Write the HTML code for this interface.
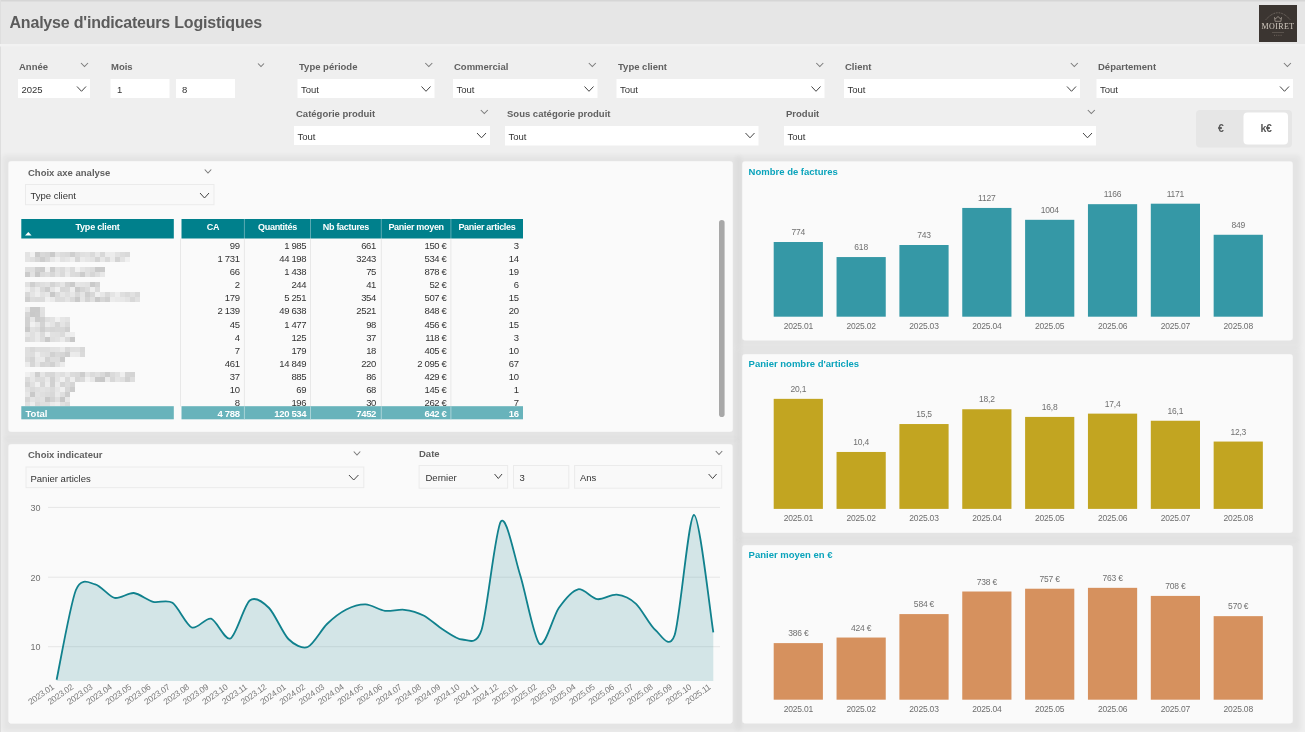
<!DOCTYPE html>
<html><head><meta charset="utf-8"><title>Analyse d'indicateurs Logistiques</title>
<style>html,body{margin:0;padding:0;background:#efefef;width:1305px;height:732px;overflow:hidden}svg{display:block;will-change:transform}</style>
</head><body>
<svg width="1305" height="732" viewBox="0 0 1305 732" font-family="'Liberation Sans', sans-serif"><defs>
<filter id="sh" x="-10%" y="-20%" width="120%" height="140%"><feMorphology in="SourceAlpha" operator="dilate" radius="7"/><feGaussianBlur stdDeviation="2.5"/><feOffset dx="0.5" dy="1"/><feComponentTransfer><feFuncA type="linear" slope="0.05"/></feComponentTransfer><feMerge><feMergeNode/><feMergeNode in="SourceGraphic"/></feMerge></filter>
<filter id="bl" x="-2%" y="-20%" width="104%" height="140%"><feGaussianBlur stdDeviation="0.6"/></filter>
</defs><rect x="0" y="0" width="1305" height="732" fill="#efefef"/><rect x="0" y="0" width="1305" height="44" fill="#e6e6e6"/><rect x="0" y="0" width="1305" height="1.5" fill="#d6d6d6"/><rect x="0" y="0" width="1" height="732" fill="#dedede"/><text x="9.5" y="28" font-size="16" fill="#5c5c5c" font-weight="bold" text-anchor="start" letter-spacing="-0.2">Analyse d'indicateurs Logistiques</text><rect x="1259" y="5" width="38" height="37" fill="#3b3531"/><text x="1278" y="29.2" font-size="8" fill="#d6cec4" text-anchor="middle" font-family="'Liberation Serif', serif" letter-spacing="0.35">MOIRET</text><path d="M1266,19.5 Q1278,6 1290,19.5" fill="none" stroke="#a0968c" stroke-width="0.7" stroke-dasharray="0.8,0.9"/><path d="M1274.5,17.5 l1.2,1.2 l2.3,-2.2 l2.3,2.2 l1.2,-1.2 l-0.6,3.8 h-5.8 z" fill="none" stroke="#c9c0b5" stroke-width="0.6"/><path d="M1272.5,32.5 h11" stroke="#8a8178" stroke-width="0.8" stroke-dasharray="1,1"/><path d="M1274,35.3 h8" stroke="#7d746b" stroke-width="0.8" stroke-dasharray="1,1.2"/><rect x="0" y="44" width="1305" height="2.5" fill="#f2f2f2"/><text x="19" y="70" font-size="9.5" fill="#606060" font-weight="bold" text-anchor="start" >Année</text><path d="M81.0,63 L84.5,66.5 L88.0,63" fill="none" stroke="#7a7a7a" stroke-width="1.05"/><rect x="18" y="79" width="72" height="19" fill="#ffffff"/><text x="21.5" y="93" font-size="9.5" fill="#333" font-weight="normal" text-anchor="start" >2025</text><path d="M77.0,86.5 L81.5,91.3 L86.0,86.5" fill="none" stroke="#444" stroke-width="1"/><text x="299" y="70" font-size="9.5" fill="#606060" font-weight="bold" text-anchor="start" >Type période</text><path d="M425.3,63 L428.8,66.5 L432.3,63" fill="none" stroke="#7a7a7a" stroke-width="1.05"/><rect x="297.5" y="79" width="137.0" height="19" fill="#ffffff"/><text x="301.0" y="93" font-size="9.5" fill="#333" font-weight="normal" text-anchor="start" >Tout</text><path d="M421.5,86.5 L426.0,91.3 L430.5,86.5" fill="none" stroke="#444" stroke-width="1"/><text x="454" y="70" font-size="9.5" fill="#606060" font-weight="bold" text-anchor="start" >Commercial</text><path d="M588.8,63 L592.3,66.5 L595.8,63" fill="none" stroke="#7a7a7a" stroke-width="1.05"/><rect x="453" y="79" width="144.5" height="19" fill="#ffffff"/><text x="456.5" y="93" font-size="9.5" fill="#333" font-weight="normal" text-anchor="start" >Tout</text><path d="M584.5,86.5 L589.0,91.3 L593.5,86.5" fill="none" stroke="#444" stroke-width="1"/><text x="618" y="70" font-size="9.5" fill="#606060" font-weight="bold" text-anchor="start" >Type client</text><path d="M816.3,63 L819.8,66.5 L823.3,63" fill="none" stroke="#7a7a7a" stroke-width="1.05"/><rect x="616.5" y="79" width="208.0" height="19" fill="#ffffff"/><text x="620.0" y="93" font-size="9.5" fill="#333" font-weight="normal" text-anchor="start" >Tout</text><path d="M811.5,86.5 L816.0,91.3 L820.5,86.5" fill="none" stroke="#444" stroke-width="1"/><text x="845" y="70" font-size="9.5" fill="#606060" font-weight="bold" text-anchor="start" >Client</text><path d="M1070.8,63 L1074.3,66.5 L1077.8,63" fill="none" stroke="#7a7a7a" stroke-width="1.05"/><rect x="844" y="79" width="236" height="19" fill="#ffffff"/><text x="847.5" y="93" font-size="9.5" fill="#333" font-weight="normal" text-anchor="start" >Tout</text><path d="M1067.0,86.5 L1071.5,91.3 L1076.0,86.5" fill="none" stroke="#444" stroke-width="1"/><text x="1098" y="70" font-size="9.5" fill="#606060" font-weight="bold" text-anchor="start" >Département</text><path d="M1283.9,63 L1287.4,66.5 L1290.9,63" fill="none" stroke="#7a7a7a" stroke-width="1.05"/><rect x="1096.5" y="79" width="196.5" height="19" fill="#ffffff"/><text x="1100.0" y="93" font-size="9.5" fill="#333" font-weight="normal" text-anchor="start" >Tout</text><path d="M1280.0,86.5 L1284.5,91.3 L1289.0,86.5" fill="none" stroke="#444" stroke-width="1"/><text x="111" y="70" font-size="9.5" fill="#606060" font-weight="bold" text-anchor="start" >Mois</text><path d="M258.0,63.5 L261,66.5 L264.0,63.5" fill="none" stroke="#7a7a7a" stroke-width="1.05"/><rect x="110.5" y="79" width="59.0" height="19" fill="#ffffff"/><text x="117" y="93" font-size="9.5" fill="#333" font-weight="normal" text-anchor="start" >1</text><rect x="176" y="79" width="59" height="19" fill="#ffffff"/><text x="182" y="93" font-size="9.5" fill="#333" font-weight="normal" text-anchor="start" >8</text><text x="296" y="117" font-size="9.5" fill="#606060" font-weight="bold" text-anchor="start" >Catégorie produit</text><path d="M480.8,110 L484.3,113.5 L487.8,110" fill="none" stroke="#7a7a7a" stroke-width="1.05"/><rect x="294" y="126" width="196" height="19" fill="#ffffff"/><text x="297.5" y="140" font-size="9.5" fill="#333" font-weight="normal" text-anchor="start" >Tout</text><path d="M477.0,133 L481.5,137.8 L486.0,133" fill="none" stroke="#444" stroke-width="1"/><text x="507" y="117" font-size="9.5" fill="#606060" font-weight="bold" text-anchor="start" >Sous catégorie produit</text><rect x="505" y="126" width="253.5" height="19.5" fill="#ffffff"/><text x="508.5" y="140" font-size="9.5" fill="#333" font-weight="normal" text-anchor="start" >Tout</text><path d="M745.5,133 L750.0,137.8 L754.5,133" fill="none" stroke="#444" stroke-width="1"/><text x="786" y="117" font-size="9.5" fill="#606060" font-weight="bold" text-anchor="start" >Produit</text><path d="M1087.8,110 L1091.3,113.5 L1094.8,110" fill="none" stroke="#7a7a7a" stroke-width="1.05"/><rect x="784" y="126" width="312" height="19.5" fill="#ffffff"/><text x="787.5" y="140" font-size="9.5" fill="#333" font-weight="normal" text-anchor="start" >Tout</text><path d="M1083.0,133 L1087.5,137.8 L1092.0,133" fill="none" stroke="#444" stroke-width="1"/><rect x="1196" y="110" width="96" height="37.5" rx="4" fill="#e6e6e6"/><rect x="1243.5" y="112.5" width="44.5" height="32" rx="4" fill="#ffffff"/><text x="1221" y="132" font-size="10.5" fill="#5a5a5a" font-weight="bold" text-anchor="middle" >€</text><text x="1266" y="132" font-size="10.5" fill="#555" font-weight="bold" text-anchor="middle" letter-spacing="-0.4">k€</text><rect x="8.5" y="161.3" width="724.2" height="270.4" rx="3" fill="#fafafa" filter="url(#sh)"/><rect x="8.5" y="444.2" width="724.0" height="279.3" rx="3" fill="#fafafa" filter="url(#sh)"/><rect x="742.3" y="161.5" width="550.4000000000001" height="178.7" rx="3" fill="#fafafa" filter="url(#sh)"/><rect x="742.3" y="354.2" width="550.4000000000001" height="178.50000000000006" rx="3" fill="#fafafa" filter="url(#sh)"/><rect x="742.3" y="545.2" width="550.4000000000001" height="178.0999999999999" rx="3" fill="#fafafa" filter="url(#sh)"/><text x="28" y="176" font-size="9.5" fill="#606060" font-weight="bold" text-anchor="start" >Choix axe analyse</text><path d="M204.75,169.5 L208,173.0 L211.25,169.5" fill="none" stroke="#7a7a7a" stroke-width="1.05"/><rect x="25.5" y="184.5" width="188.5" height="20.19999999999999" fill="#f9f9f9" stroke="#ebebeb" stroke-width="1"/><text x="30.5" y="199" font-size="9.5" fill="#333" font-weight="normal" text-anchor="start" >Type client</text><path d="M200.0,193 L204.5,198 L209.0,193" fill="none" stroke="#444" stroke-width="1"/><rect x="21.3" y="219" width="152.5" height="19.5" fill="#00808c"/><rect x="181.5" y="219" width="341.5" height="19.5" fill="#00808c"/><text x="97.5" y="230" font-size="9" fill="#fff" font-weight="bold" text-anchor="middle" letter-spacing="-0.2">Type client</text><path d="M25,235.5 L28.3,232 L31.6,235.5 Z" fill="#fff"/><text x="212.95" y="230" font-size="9" fill="#fff" font-weight="bold" text-anchor="middle" letter-spacing="-0.3">CA</text><text x="277.45" y="230" font-size="9" fill="#fff" font-weight="bold" text-anchor="middle" letter-spacing="-0.3">Quantités</text><text x="345.9" y="230" font-size="9" fill="#fff" font-weight="bold" text-anchor="middle" letter-spacing="-0.3">Nb factures</text><text x="416.1" y="230" font-size="9" fill="#fff" font-weight="bold" text-anchor="middle" letter-spacing="-0.3">Panier moyen</text><text x="486.95" y="230" font-size="9" fill="#fff" font-weight="bold" text-anchor="middle" letter-spacing="-0.3">Panier articles</text><rect x="243.9" y="219" width="1" height="19.5" fill="#5aaab3"/><rect x="310.0" y="219" width="1" height="19.5" fill="#5aaab3"/><rect x="380.8" y="219" width="1" height="19.5" fill="#5aaab3"/><rect x="450.4" y="219" width="1" height="19.5" fill="#5aaab3"/><rect x="180.0" y="238.5" width="1" height="168" fill="#e8e8e8"/><rect x="243.9" y="238.5" width="1" height="168" fill="#e8e8e8"/><rect x="310.0" y="238.5" width="1" height="168" fill="#e8e8e8"/><rect x="380.8" y="238.5" width="1" height="168" fill="#e8e8e8"/><rect x="450.4" y="238.5" width="1" height="168" fill="#e8e8e8"/><clipPath id="tb"><rect x="15" y="238.5" width="520" height="167.7"/></clipPath><g clip-path="url(#tb)"><text x="239.6" y="249.2" font-size="9.5" fill="#333" font-weight="normal" text-anchor="end" letter-spacing="-0.35">99</text><text x="306.2" y="249.2" font-size="9.5" fill="#333" font-weight="normal" text-anchor="end" letter-spacing="-0.35">1 985</text><text x="376" y="249.2" font-size="9.5" fill="#333" font-weight="normal" text-anchor="end" letter-spacing="-0.35">661</text><text x="446.5" y="249.2" font-size="9.5" fill="#333" font-weight="normal" text-anchor="end" letter-spacing="-0.35">150 €</text><text x="518.7" y="249.2" font-size="9.5" fill="#333" font-weight="normal" text-anchor="end" letter-spacing="-0.35">3</text><text x="239.6" y="262.25" font-size="9.5" fill="#333" font-weight="normal" text-anchor="end" letter-spacing="-0.35">1 731</text><text x="306.2" y="262.25" font-size="9.5" fill="#333" font-weight="normal" text-anchor="end" letter-spacing="-0.35">44 198</text><text x="376" y="262.25" font-size="9.5" fill="#333" font-weight="normal" text-anchor="end" letter-spacing="-0.35">3243</text><text x="446.5" y="262.25" font-size="9.5" fill="#333" font-weight="normal" text-anchor="end" letter-spacing="-0.35">534 €</text><text x="518.7" y="262.25" font-size="9.5" fill="#333" font-weight="normal" text-anchor="end" letter-spacing="-0.35">14</text><text x="239.6" y="275.3" font-size="9.5" fill="#333" font-weight="normal" text-anchor="end" letter-spacing="-0.35">66</text><text x="306.2" y="275.3" font-size="9.5" fill="#333" font-weight="normal" text-anchor="end" letter-spacing="-0.35">1 438</text><text x="376" y="275.3" font-size="9.5" fill="#333" font-weight="normal" text-anchor="end" letter-spacing="-0.35">75</text><text x="446.5" y="275.3" font-size="9.5" fill="#333" font-weight="normal" text-anchor="end" letter-spacing="-0.35">878 €</text><text x="518.7" y="275.3" font-size="9.5" fill="#333" font-weight="normal" text-anchor="end" letter-spacing="-0.35">19</text><text x="239.6" y="288.35" font-size="9.5" fill="#333" font-weight="normal" text-anchor="end" letter-spacing="-0.35">2</text><text x="306.2" y="288.35" font-size="9.5" fill="#333" font-weight="normal" text-anchor="end" letter-spacing="-0.35">244</text><text x="376" y="288.35" font-size="9.5" fill="#333" font-weight="normal" text-anchor="end" letter-spacing="-0.35">41</text><text x="446.5" y="288.35" font-size="9.5" fill="#333" font-weight="normal" text-anchor="end" letter-spacing="-0.35">52 €</text><text x="518.7" y="288.35" font-size="9.5" fill="#333" font-weight="normal" text-anchor="end" letter-spacing="-0.35">6</text><text x="239.6" y="301.4" font-size="9.5" fill="#333" font-weight="normal" text-anchor="end" letter-spacing="-0.35">179</text><text x="306.2" y="301.4" font-size="9.5" fill="#333" font-weight="normal" text-anchor="end" letter-spacing="-0.35">5 251</text><text x="376" y="301.4" font-size="9.5" fill="#333" font-weight="normal" text-anchor="end" letter-spacing="-0.35">354</text><text x="446.5" y="301.4" font-size="9.5" fill="#333" font-weight="normal" text-anchor="end" letter-spacing="-0.35">507 €</text><text x="518.7" y="301.4" font-size="9.5" fill="#333" font-weight="normal" text-anchor="end" letter-spacing="-0.35">15</text><text x="239.6" y="314.45" font-size="9.5" fill="#333" font-weight="normal" text-anchor="end" letter-spacing="-0.35">2 139</text><text x="306.2" y="314.45" font-size="9.5" fill="#333" font-weight="normal" text-anchor="end" letter-spacing="-0.35">49 638</text><text x="376" y="314.45" font-size="9.5" fill="#333" font-weight="normal" text-anchor="end" letter-spacing="-0.35">2521</text><text x="446.5" y="314.45" font-size="9.5" fill="#333" font-weight="normal" text-anchor="end" letter-spacing="-0.35">848 €</text><text x="518.7" y="314.45" font-size="9.5" fill="#333" font-weight="normal" text-anchor="end" letter-spacing="-0.35">20</text><text x="239.6" y="327.5" font-size="9.5" fill="#333" font-weight="normal" text-anchor="end" letter-spacing="-0.35">45</text><text x="306.2" y="327.5" font-size="9.5" fill="#333" font-weight="normal" text-anchor="end" letter-spacing="-0.35">1 477</text><text x="376" y="327.5" font-size="9.5" fill="#333" font-weight="normal" text-anchor="end" letter-spacing="-0.35">98</text><text x="446.5" y="327.5" font-size="9.5" fill="#333" font-weight="normal" text-anchor="end" letter-spacing="-0.35">456 €</text><text x="518.7" y="327.5" font-size="9.5" fill="#333" font-weight="normal" text-anchor="end" letter-spacing="-0.35">15</text><text x="239.6" y="340.55" font-size="9.5" fill="#333" font-weight="normal" text-anchor="end" letter-spacing="-0.35">4</text><text x="306.2" y="340.55" font-size="9.5" fill="#333" font-weight="normal" text-anchor="end" letter-spacing="-0.35">125</text><text x="376" y="340.55" font-size="9.5" fill="#333" font-weight="normal" text-anchor="end" letter-spacing="-0.35">37</text><text x="446.5" y="340.55" font-size="9.5" fill="#333" font-weight="normal" text-anchor="end" letter-spacing="-0.35">118 €</text><text x="518.7" y="340.55" font-size="9.5" fill="#333" font-weight="normal" text-anchor="end" letter-spacing="-0.35">3</text><text x="239.6" y="353.6" font-size="9.5" fill="#333" font-weight="normal" text-anchor="end" letter-spacing="-0.35">7</text><text x="306.2" y="353.6" font-size="9.5" fill="#333" font-weight="normal" text-anchor="end" letter-spacing="-0.35">179</text><text x="376" y="353.6" font-size="9.5" fill="#333" font-weight="normal" text-anchor="end" letter-spacing="-0.35">18</text><text x="446.5" y="353.6" font-size="9.5" fill="#333" font-weight="normal" text-anchor="end" letter-spacing="-0.35">405 €</text><text x="518.7" y="353.6" font-size="9.5" fill="#333" font-weight="normal" text-anchor="end" letter-spacing="-0.35">10</text><text x="239.6" y="366.65" font-size="9.5" fill="#333" font-weight="normal" text-anchor="end" letter-spacing="-0.35">461</text><text x="306.2" y="366.65" font-size="9.5" fill="#333" font-weight="normal" text-anchor="end" letter-spacing="-0.35">14 849</text><text x="376" y="366.65" font-size="9.5" fill="#333" font-weight="normal" text-anchor="end" letter-spacing="-0.35">220</text><text x="446.5" y="366.65" font-size="9.5" fill="#333" font-weight="normal" text-anchor="end" letter-spacing="-0.35">2 095 €</text><text x="518.7" y="366.65" font-size="9.5" fill="#333" font-weight="normal" text-anchor="end" letter-spacing="-0.35">67</text><text x="239.6" y="379.7" font-size="9.5" fill="#333" font-weight="normal" text-anchor="end" letter-spacing="-0.35">37</text><text x="306.2" y="379.7" font-size="9.5" fill="#333" font-weight="normal" text-anchor="end" letter-spacing="-0.35">885</text><text x="376" y="379.7" font-size="9.5" fill="#333" font-weight="normal" text-anchor="end" letter-spacing="-0.35">86</text><text x="446.5" y="379.7" font-size="9.5" fill="#333" font-weight="normal" text-anchor="end" letter-spacing="-0.35">429 €</text><text x="518.7" y="379.7" font-size="9.5" fill="#333" font-weight="normal" text-anchor="end" letter-spacing="-0.35">10</text><text x="239.6" y="392.75" font-size="9.5" fill="#333" font-weight="normal" text-anchor="end" letter-spacing="-0.35">10</text><text x="306.2" y="392.75" font-size="9.5" fill="#333" font-weight="normal" text-anchor="end" letter-spacing="-0.35">69</text><text x="376" y="392.75" font-size="9.5" fill="#333" font-weight="normal" text-anchor="end" letter-spacing="-0.35">68</text><text x="446.5" y="392.75" font-size="9.5" fill="#333" font-weight="normal" text-anchor="end" letter-spacing="-0.35">145 €</text><text x="518.7" y="392.75" font-size="9.5" fill="#333" font-weight="normal" text-anchor="end" letter-spacing="-0.35">1</text><text x="239.6" y="405.8" font-size="9.5" fill="#333" font-weight="normal" text-anchor="end" letter-spacing="-0.35">8</text><text x="306.2" y="405.8" font-size="9.5" fill="#333" font-weight="normal" text-anchor="end" letter-spacing="-0.35">196</text><text x="376" y="405.8" font-size="9.5" fill="#333" font-weight="normal" text-anchor="end" letter-spacing="-0.35">30</text><text x="446.5" y="405.8" font-size="9.5" fill="#333" font-weight="normal" text-anchor="end" letter-spacing="-0.35">262 €</text><text x="518.7" y="405.8" font-size="9.5" fill="#333" font-weight="normal" text-anchor="end" letter-spacing="-0.35">7</text><g filter="url(#bl)"><rect x="25" y="252" width="5" height="5" fill="rgb(227,227,227)"/><rect x="30" y="252" width="5" height="5" fill="rgb(241,241,241)"/><rect x="35" y="252" width="5" height="5" fill="rgb(203,203,203)"/><rect x="40" y="252" width="5" height="5" fill="rgb(216,216,216)"/><rect x="45" y="252" width="5" height="5" fill="rgb(213,213,213)"/><rect x="50" y="252" width="5" height="5" fill="rgb(202,202,202)"/><rect x="55" y="252" width="5" height="5" fill="rgb(226,226,226)"/><rect x="60" y="252" width="5" height="5" fill="rgb(220,220,220)"/><rect x="65" y="252" width="5" height="5" fill="rgb(218,218,218)"/><rect x="70" y="252" width="5" height="5" fill="rgb(207,207,207)"/><rect x="75" y="252" width="5" height="5" fill="rgb(219,219,219)"/><rect x="80" y="252" width="5" height="5" fill="rgb(224,224,224)"/><rect x="85" y="252" width="5" height="5" fill="rgb(226,226,226)"/><rect x="90" y="252" width="5" height="5" fill="rgb(218,218,218)"/><rect x="95" y="252" width="5" height="5" fill="rgb(232,232,232)"/><rect x="100" y="252" width="5" height="5" fill="rgb(216,216,216)"/><rect x="105" y="252" width="5" height="5" fill="rgb(236,236,236)"/><rect x="110" y="252" width="5" height="5" fill="rgb(236,236,236)"/><rect x="115" y="252" width="5" height="5" fill="rgb(226,226,226)"/><rect x="120" y="252" width="5" height="5" fill="rgb(220,220,220)"/><rect x="125" y="252" width="5" height="5" fill="rgb(217,217,217)"/><rect x="25" y="257" width="5" height="5" fill="rgb(228,228,228)"/><rect x="30" y="257" width="5" height="5" fill="rgb(224,224,224)"/><rect x="35" y="257" width="5" height="5" fill="rgb(215,215,215)"/><rect x="40" y="257" width="5" height="5" fill="rgb(205,205,205)"/><rect x="45" y="257" width="5" height="5" fill="rgb(216,216,216)"/><rect x="50" y="257" width="5" height="5" fill="rgb(232,232,232)"/><rect x="55" y="257" width="5" height="5" fill="rgb(240,240,240)"/><rect x="60" y="257" width="5" height="5" fill="rgb(226,226,226)"/><rect x="65" y="257" width="5" height="5" fill="rgb(230,230,230)"/><rect x="70" y="257" width="5" height="5" fill="rgb(238,238,238)"/><rect x="75" y="257" width="5" height="5" fill="rgb(215,215,215)"/><rect x="80" y="257" width="5" height="5" fill="rgb(235,235,235)"/><rect x="85" y="257" width="5" height="5" fill="rgb(230,230,230)"/><rect x="90" y="257" width="5" height="5" fill="rgb(227,227,227)"/><rect x="95" y="257" width="5" height="5" fill="rgb(212,212,212)"/><rect x="100" y="257" width="5" height="5" fill="rgb(231,231,231)"/><rect x="105" y="257" width="5" height="5" fill="rgb(218,218,218)"/><rect x="110" y="257" width="5" height="5" fill="rgb(235,235,235)"/><rect x="115" y="257" width="5" height="5" fill="rgb(212,212,212)"/><rect x="120" y="257" width="5" height="5" fill="rgb(227,227,227)"/><rect x="125" y="257" width="5" height="5" fill="rgb(240,240,240)"/><rect x="25" y="267" width="5" height="5" fill="rgb(223,223,223)"/><rect x="30" y="267" width="5" height="5" fill="rgb(223,223,223)"/><rect x="35" y="267" width="5" height="5" fill="rgb(207,207,207)"/><rect x="40" y="267" width="5" height="5" fill="rgb(204,204,204)"/><rect x="45" y="267" width="5" height="5" fill="rgb(241,241,241)"/><rect x="50" y="267" width="5" height="5" fill="rgb(205,205,205)"/><rect x="55" y="267" width="5" height="5" fill="rgb(225,225,225)"/><rect x="60" y="267" width="5" height="5" fill="rgb(219,219,219)"/><rect x="65" y="267" width="5" height="5" fill="rgb(231,231,231)"/><rect x="70" y="267" width="5" height="5" fill="rgb(220,220,220)"/><rect x="75" y="267" width="5" height="5" fill="rgb(242,242,242)"/><rect x="80" y="267" width="5" height="5" fill="rgb(229,229,229)"/><rect x="85" y="267" width="5" height="5" fill="rgb(224,224,224)"/><rect x="90" y="267" width="5" height="5" fill="rgb(220,220,220)"/><rect x="95" y="267" width="5" height="5" fill="rgb(202,202,202)"/><rect x="100" y="267" width="5" height="5" fill="rgb(203,203,203)"/><rect x="25" y="272" width="5" height="5" fill="rgb(203,203,203)"/><rect x="30" y="272" width="5" height="5" fill="rgb(226,226,226)"/><rect x="35" y="272" width="5" height="5" fill="rgb(200,200,200)"/><rect x="40" y="272" width="5" height="5" fill="rgb(219,219,219)"/><rect x="45" y="272" width="5" height="5" fill="rgb(223,223,223)"/><rect x="50" y="272" width="5" height="5" fill="rgb(215,215,215)"/><rect x="55" y="272" width="5" height="5" fill="rgb(227,227,227)"/><rect x="60" y="272" width="5" height="5" fill="rgb(218,218,218)"/><rect x="65" y="272" width="5" height="5" fill="rgb(235,235,235)"/><rect x="70" y="272" width="5" height="5" fill="rgb(220,220,220)"/><rect x="75" y="272" width="5" height="5" fill="rgb(218,218,218)"/><rect x="80" y="272" width="5" height="5" fill="rgb(204,204,204)"/><rect x="85" y="272" width="5" height="5" fill="rgb(224,224,224)"/><rect x="90" y="272" width="5" height="5" fill="rgb(214,214,214)"/><rect x="95" y="272" width="5" height="5" fill="rgb(223,223,223)"/><rect x="100" y="272" width="5" height="5" fill="rgb(232,232,232)"/><rect x="25" y="282" width="5" height="5" fill="rgb(225,225,225)"/><rect x="30" y="282" width="5" height="5" fill="rgb(207,207,207)"/><rect x="35" y="282" width="5" height="5" fill="rgb(219,219,219)"/><rect x="40" y="282" width="5" height="5" fill="rgb(223,223,223)"/><rect x="45" y="282" width="5" height="5" fill="rgb(226,226,226)"/><rect x="50" y="282" width="5" height="5" fill="rgb(212,212,212)"/><rect x="55" y="282" width="5" height="5" fill="rgb(221,221,221)"/><rect x="60" y="282" width="5" height="5" fill="rgb(229,229,229)"/><rect x="65" y="282" width="5" height="5" fill="rgb(211,211,211)"/><rect x="70" y="282" width="5" height="5" fill="rgb(203,203,203)"/><rect x="75" y="282" width="5" height="5" fill="rgb(230,230,230)"/><rect x="80" y="282" width="5" height="5" fill="rgb(228,228,228)"/><rect x="85" y="282" width="5" height="5" fill="rgb(226,226,226)"/><rect x="90" y="282" width="5" height="5" fill="rgb(202,202,202)"/><rect x="95" y="282" width="5" height="5" fill="rgb(212,212,212)"/><rect x="25" y="287" width="5" height="5" fill="rgb(240,240,240)"/><rect x="30" y="287" width="5" height="5" fill="rgb(225,225,225)"/><rect x="35" y="287" width="5" height="5" fill="rgb(235,235,235)"/><rect x="40" y="287" width="5" height="5" fill="rgb(217,217,217)"/><rect x="45" y="287" width="5" height="5" fill="rgb(205,205,205)"/><rect x="50" y="287" width="5" height="5" fill="rgb(229,229,229)"/><rect x="55" y="287" width="5" height="5" fill="rgb(241,241,241)"/><rect x="60" y="287" width="5" height="5" fill="rgb(215,215,215)"/><rect x="65" y="287" width="5" height="5" fill="rgb(217,217,217)"/><rect x="70" y="287" width="5" height="5" fill="rgb(238,238,238)"/><rect x="75" y="287" width="5" height="5" fill="rgb(203,203,203)"/><rect x="80" y="287" width="5" height="5" fill="rgb(213,213,213)"/><rect x="85" y="287" width="5" height="5" fill="rgb(220,220,220)"/><rect x="90" y="287" width="5" height="5" fill="rgb(239,239,239)"/><rect x="95" y="287" width="5" height="5" fill="rgb(220,220,220)"/><rect x="25" y="292" width="5" height="5" fill="rgb(216,216,216)"/><rect x="30" y="292" width="5" height="5" fill="rgb(229,229,229)"/><rect x="35" y="292" width="5" height="5" fill="rgb(238,238,238)"/><rect x="40" y="292" width="5" height="5" fill="rgb(226,226,226)"/><rect x="45" y="292" width="5" height="5" fill="rgb(231,231,231)"/><rect x="50" y="292" width="5" height="5" fill="rgb(200,200,200)"/><rect x="55" y="292" width="5" height="5" fill="rgb(219,219,219)"/><rect x="60" y="292" width="5" height="5" fill="rgb(230,230,230)"/><rect x="65" y="292" width="5" height="5" fill="rgb(223,223,223)"/><rect x="70" y="292" width="5" height="5" fill="rgb(231,231,231)"/><rect x="75" y="292" width="5" height="5" fill="rgb(217,217,217)"/><rect x="80" y="292" width="5" height="5" fill="rgb(228,228,228)"/><rect x="85" y="292" width="5" height="5" fill="rgb(206,206,206)"/><rect x="90" y="292" width="5" height="5" fill="rgb(216,216,216)"/><rect x="95" y="292" width="5" height="5" fill="rgb(240,240,240)"/><rect x="100" y="292" width="5" height="5" fill="rgb(231,231,231)"/><rect x="105" y="292" width="5" height="5" fill="rgb(218,218,218)"/><rect x="110" y="292" width="5" height="5" fill="rgb(228,228,228)"/><rect x="115" y="292" width="5" height="5" fill="rgb(237,237,237)"/><rect x="120" y="292" width="5" height="5" fill="rgb(223,223,223)"/><rect x="125" y="292" width="5" height="5" fill="rgb(218,218,218)"/><rect x="130" y="292" width="5" height="5" fill="rgb(225,225,225)"/><rect x="135" y="292" width="5" height="5" fill="rgb(217,217,217)"/><rect x="25" y="297" width="5" height="5" fill="rgb(207,207,207)"/><rect x="30" y="297" width="5" height="5" fill="rgb(221,221,221)"/><rect x="35" y="297" width="5" height="5" fill="rgb(219,219,219)"/><rect x="40" y="297" width="5" height="5" fill="rgb(220,220,220)"/><rect x="45" y="297" width="5" height="5" fill="rgb(240,240,240)"/><rect x="50" y="297" width="5" height="5" fill="rgb(235,235,235)"/><rect x="55" y="297" width="5" height="5" fill="rgb(220,220,220)"/><rect x="60" y="297" width="5" height="5" fill="rgb(220,220,220)"/><rect x="65" y="297" width="5" height="5" fill="rgb(228,228,228)"/><rect x="70" y="297" width="5" height="5" fill="rgb(218,218,218)"/><rect x="75" y="297" width="5" height="5" fill="rgb(202,202,202)"/><rect x="80" y="297" width="5" height="5" fill="rgb(229,229,229)"/><rect x="85" y="297" width="5" height="5" fill="rgb(212,212,212)"/><rect x="90" y="297" width="5" height="5" fill="rgb(224,224,224)"/><rect x="95" y="297" width="5" height="5" fill="rgb(202,202,202)"/><rect x="100" y="297" width="5" height="5" fill="rgb(215,215,215)"/><rect x="105" y="297" width="5" height="5" fill="rgb(208,208,208)"/><rect x="110" y="297" width="5" height="5" fill="rgb(236,236,236)"/><rect x="115" y="297" width="5" height="5" fill="rgb(233,233,233)"/><rect x="120" y="297" width="5" height="5" fill="rgb(232,232,232)"/><rect x="125" y="297" width="5" height="5" fill="rgb(227,227,227)"/><rect x="130" y="297" width="5" height="5" fill="rgb(216,216,216)"/><rect x="135" y="297" width="5" height="5" fill="rgb(225,225,225)"/><rect x="25" y="307" width="5" height="5" fill="rgb(232,232,232)"/><rect x="30" y="307" width="5" height="5" fill="rgb(202,202,202)"/><rect x="35" y="307" width="5" height="5" fill="rgb(202,202,202)"/><rect x="40" y="307" width="5" height="5" fill="rgb(225,225,225)"/><rect x="25" y="312" width="5" height="5" fill="rgb(213,213,213)"/><rect x="30" y="312" width="5" height="5" fill="rgb(201,201,201)"/><rect x="35" y="312" width="5" height="5" fill="rgb(203,203,203)"/><rect x="40" y="312" width="5" height="5" fill="rgb(224,224,224)"/><rect x="25" y="317" width="5" height="5" fill="rgb(209,209,209)"/><rect x="30" y="317" width="5" height="5" fill="rgb(231,231,231)"/><rect x="35" y="317" width="5" height="5" fill="rgb(205,205,205)"/><rect x="40" y="317" width="5" height="5" fill="rgb(208,208,208)"/><rect x="45" y="317" width="5" height="5" fill="rgb(223,223,223)"/><rect x="50" y="317" width="5" height="5" fill="rgb(227,227,227)"/><rect x="55" y="317" width="5" height="5" fill="rgb(241,241,241)"/><rect x="60" y="317" width="5" height="5" fill="rgb(230,230,230)"/><rect x="65" y="317" width="5" height="5" fill="rgb(227,227,227)"/><rect x="25" y="322" width="5" height="5" fill="rgb(209,209,209)"/><rect x="30" y="322" width="5" height="5" fill="rgb(241,241,241)"/><rect x="35" y="322" width="5" height="5" fill="rgb(232,232,232)"/><rect x="40" y="322" width="5" height="5" fill="rgb(211,211,211)"/><rect x="45" y="322" width="5" height="5" fill="rgb(235,235,235)"/><rect x="50" y="322" width="5" height="5" fill="rgb(228,228,228)"/><rect x="55" y="322" width="5" height="5" fill="rgb(214,214,214)"/><rect x="60" y="322" width="5" height="5" fill="rgb(228,228,228)"/><rect x="65" y="322" width="5" height="5" fill="rgb(219,219,219)"/><rect x="25" y="327" width="5" height="5" fill="rgb(201,201,201)"/><rect x="30" y="327" width="5" height="5" fill="rgb(226,226,226)"/><rect x="35" y="327" width="5" height="5" fill="rgb(222,222,222)"/><rect x="40" y="327" width="5" height="5" fill="rgb(207,207,207)"/><rect x="45" y="327" width="5" height="5" fill="rgb(217,217,217)"/><rect x="50" y="327" width="5" height="5" fill="rgb(214,214,214)"/><rect x="55" y="327" width="5" height="5" fill="rgb(216,216,216)"/><rect x="60" y="327" width="5" height="5" fill="rgb(216,216,216)"/><rect x="65" y="327" width="5" height="5" fill="rgb(208,208,208)"/><rect x="25" y="332" width="5" height="5" fill="rgb(230,230,230)"/><rect x="30" y="332" width="5" height="5" fill="rgb(224,224,224)"/><rect x="35" y="332" width="5" height="5" fill="rgb(233,233,233)"/><rect x="40" y="332" width="5" height="5" fill="rgb(219,219,219)"/><rect x="45" y="332" width="5" height="5" fill="rgb(240,240,240)"/><rect x="50" y="332" width="5" height="5" fill="rgb(225,225,225)"/><rect x="55" y="332" width="5" height="5" fill="rgb(224,224,224)"/><rect x="60" y="332" width="5" height="5" fill="rgb(219,219,219)"/><rect x="65" y="332" width="5" height="5" fill="rgb(237,237,237)"/><rect x="70" y="332" width="5" height="5" fill="rgb(238,238,238)"/><rect x="25" y="337" width="5" height="5" fill="rgb(219,219,219)"/><rect x="30" y="337" width="5" height="5" fill="rgb(224,224,224)"/><rect x="35" y="337" width="5" height="5" fill="rgb(233,233,233)"/><rect x="40" y="337" width="5" height="5" fill="rgb(221,221,221)"/><rect x="45" y="337" width="5" height="5" fill="rgb(202,202,202)"/><rect x="50" y="337" width="5" height="5" fill="rgb(223,223,223)"/><rect x="55" y="337" width="5" height="5" fill="rgb(226,226,226)"/><rect x="60" y="337" width="5" height="5" fill="rgb(235,235,235)"/><rect x="65" y="337" width="5" height="5" fill="rgb(219,219,219)"/><rect x="70" y="337" width="5" height="5" fill="rgb(200,200,200)"/><rect x="25" y="347" width="5" height="5" fill="rgb(223,223,223)"/><rect x="30" y="347" width="5" height="5" fill="rgb(217,217,217)"/><rect x="35" y="347" width="5" height="5" fill="rgb(223,223,223)"/><rect x="40" y="347" width="5" height="5" fill="rgb(222,222,222)"/><rect x="45" y="347" width="5" height="5" fill="rgb(222,222,222)"/><rect x="50" y="347" width="5" height="5" fill="rgb(226,226,226)"/><rect x="55" y="347" width="5" height="5" fill="rgb(227,227,227)"/><rect x="60" y="347" width="5" height="5" fill="rgb(234,234,234)"/><rect x="65" y="347" width="5" height="5" fill="rgb(217,217,217)"/><rect x="70" y="347" width="5" height="5" fill="rgb(223,223,223)"/><rect x="75" y="347" width="5" height="5" fill="rgb(224,224,224)"/><rect x="80" y="347" width="5" height="5" fill="rgb(216,216,216)"/><rect x="25" y="352" width="5" height="5" fill="rgb(223,223,223)"/><rect x="30" y="352" width="5" height="5" fill="rgb(221,221,221)"/><rect x="35" y="352" width="5" height="5" fill="rgb(237,237,237)"/><rect x="40" y="352" width="5" height="5" fill="rgb(226,226,226)"/><rect x="45" y="352" width="5" height="5" fill="rgb(224,224,224)"/><rect x="50" y="352" width="5" height="5" fill="rgb(209,209,209)"/><rect x="55" y="352" width="5" height="5" fill="rgb(217,217,217)"/><rect x="60" y="352" width="5" height="5" fill="rgb(214,214,214)"/><rect x="65" y="352" width="5" height="5" fill="rgb(206,206,206)"/><rect x="70" y="352" width="5" height="5" fill="rgb(235,235,235)"/><rect x="75" y="352" width="5" height="5" fill="rgb(234,234,234)"/><rect x="80" y="352" width="5" height="5" fill="rgb(218,218,218)"/><rect x="25" y="357" width="5" height="5" fill="rgb(219,219,219)"/><rect x="30" y="357" width="5" height="5" fill="rgb(212,212,212)"/><rect x="35" y="357" width="5" height="5" fill="rgb(233,233,233)"/><rect x="40" y="357" width="5" height="5" fill="rgb(235,235,235)"/><rect x="45" y="357" width="5" height="5" fill="rgb(211,211,211)"/><rect x="50" y="357" width="5" height="5" fill="rgb(222,222,222)"/><rect x="55" y="357" width="5" height="5" fill="rgb(222,222,222)"/><rect x="60" y="357" width="5" height="5" fill="rgb(203,203,203)"/><rect x="25" y="362" width="5" height="5" fill="rgb(235,235,235)"/><rect x="30" y="362" width="5" height="5" fill="rgb(214,214,214)"/><rect x="35" y="362" width="5" height="5" fill="rgb(230,230,230)"/><rect x="40" y="362" width="5" height="5" fill="rgb(213,213,213)"/><rect x="45" y="362" width="5" height="5" fill="rgb(216,216,216)"/><rect x="50" y="362" width="5" height="5" fill="rgb(209,209,209)"/><rect x="55" y="362" width="5" height="5" fill="rgb(225,225,225)"/><rect x="60" y="362" width="5" height="5" fill="rgb(236,236,236)"/><rect x="25" y="372" width="5" height="5" fill="rgb(240,240,240)"/><rect x="30" y="372" width="5" height="5" fill="rgb(232,232,232)"/><rect x="35" y="372" width="5" height="5" fill="rgb(206,206,206)"/><rect x="40" y="372" width="5" height="5" fill="rgb(229,229,229)"/><rect x="45" y="372" width="5" height="5" fill="rgb(216,216,216)"/><rect x="50" y="372" width="5" height="5" fill="rgb(215,215,215)"/><rect x="55" y="372" width="5" height="5" fill="rgb(227,227,227)"/><rect x="60" y="372" width="5" height="5" fill="rgb(223,223,223)"/><rect x="65" y="372" width="5" height="5" fill="rgb(232,232,232)"/><rect x="70" y="372" width="5" height="5" fill="rgb(219,219,219)"/><rect x="75" y="372" width="5" height="5" fill="rgb(217,217,217)"/><rect x="80" y="372" width="5" height="5" fill="rgb(205,205,205)"/><rect x="85" y="372" width="5" height="5" fill="rgb(228,228,228)"/><rect x="90" y="372" width="5" height="5" fill="rgb(219,219,219)"/><rect x="95" y="372" width="5" height="5" fill="rgb(224,224,224)"/><rect x="100" y="372" width="5" height="5" fill="rgb(217,217,217)"/><rect x="105" y="372" width="5" height="5" fill="rgb(205,205,205)"/><rect x="110" y="372" width="5" height="5" fill="rgb(219,219,219)"/><rect x="115" y="372" width="5" height="5" fill="rgb(225,225,225)"/><rect x="120" y="372" width="5" height="5" fill="rgb(239,239,239)"/><rect x="125" y="372" width="5" height="5" fill="rgb(213,213,213)"/><rect x="130" y="372" width="5" height="5" fill="rgb(212,212,212)"/><rect x="25" y="377" width="5" height="5" fill="rgb(220,220,220)"/><rect x="30" y="377" width="5" height="5" fill="rgb(231,231,231)"/><rect x="35" y="377" width="5" height="5" fill="rgb(220,220,220)"/><rect x="40" y="377" width="5" height="5" fill="rgb(220,220,220)"/><rect x="45" y="377" width="5" height="5" fill="rgb(232,232,232)"/><rect x="50" y="377" width="5" height="5" fill="rgb(209,209,209)"/><rect x="55" y="377" width="5" height="5" fill="rgb(228,228,228)"/><rect x="60" y="377" width="5" height="5" fill="rgb(240,240,240)"/><rect x="65" y="377" width="5" height="5" fill="rgb(218,218,218)"/><rect x="70" y="377" width="5" height="5" fill="rgb(238,238,238)"/><rect x="75" y="377" width="5" height="5" fill="rgb(214,214,214)"/><rect x="80" y="377" width="5" height="5" fill="rgb(219,219,219)"/><rect x="85" y="377" width="5" height="5" fill="rgb(241,241,241)"/><rect x="90" y="377" width="5" height="5" fill="rgb(232,232,232)"/><rect x="95" y="377" width="5" height="5" fill="rgb(202,202,202)"/><rect x="100" y="377" width="5" height="5" fill="rgb(200,200,200)"/><rect x="105" y="377" width="5" height="5" fill="rgb(235,235,235)"/><rect x="110" y="377" width="5" height="5" fill="rgb(216,216,216)"/><rect x="115" y="377" width="5" height="5" fill="rgb(228,228,228)"/><rect x="120" y="377" width="5" height="5" fill="rgb(224,224,224)"/><rect x="125" y="377" width="5" height="5" fill="rgb(209,209,209)"/><rect x="130" y="377" width="5" height="5" fill="rgb(222,222,222)"/><rect x="25" y="382" width="5" height="5" fill="rgb(212,212,212)"/><rect x="30" y="382" width="5" height="5" fill="rgb(225,225,225)"/><rect x="35" y="382" width="5" height="5" fill="rgb(240,240,240)"/><rect x="40" y="382" width="5" height="5" fill="rgb(216,216,216)"/><rect x="45" y="382" width="5" height="5" fill="rgb(237,237,237)"/><rect x="50" y="382" width="5" height="5" fill="rgb(209,209,209)"/><rect x="55" y="382" width="5" height="5" fill="rgb(236,236,236)"/><rect x="60" y="382" width="5" height="5" fill="rgb(213,213,213)"/><rect x="65" y="382" width="5" height="5" fill="rgb(221,221,221)"/><rect x="70" y="382" width="5" height="5" fill="rgb(213,213,213)"/><rect x="25" y="387" width="5" height="5" fill="rgb(226,226,226)"/><rect x="30" y="387" width="5" height="5" fill="rgb(218,218,218)"/><rect x="35" y="387" width="5" height="5" fill="rgb(223,223,223)"/><rect x="40" y="387" width="5" height="5" fill="rgb(227,227,227)"/><rect x="45" y="387" width="5" height="5" fill="rgb(224,224,224)"/><rect x="50" y="387" width="5" height="5" fill="rgb(219,219,219)"/><rect x="55" y="387" width="5" height="5" fill="rgb(230,230,230)"/><rect x="60" y="387" width="5" height="5" fill="rgb(240,240,240)"/><rect x="65" y="387" width="5" height="5" fill="rgb(216,216,216)"/><rect x="70" y="387" width="5" height="5" fill="rgb(204,204,204)"/><rect x="25" y="392" width="5" height="5" fill="rgb(231,231,231)"/><rect x="30" y="392" width="5" height="5" fill="rgb(201,201,201)"/><rect x="35" y="392" width="5" height="5" fill="rgb(226,226,226)"/><rect x="40" y="392" width="5" height="5" fill="rgb(223,223,223)"/><rect x="45" y="392" width="5" height="5" fill="rgb(220,220,220)"/><rect x="50" y="392" width="5" height="5" fill="rgb(216,216,216)"/><rect x="55" y="392" width="5" height="5" fill="rgb(233,233,233)"/><rect x="60" y="392" width="5" height="5" fill="rgb(223,223,223)"/><rect x="65" y="392" width="5" height="5" fill="rgb(205,205,205)"/><rect x="25" y="397" width="5" height="5" fill="rgb(214,214,214)"/><rect x="30" y="397" width="5" height="5" fill="rgb(228,228,228)"/><rect x="35" y="397" width="5" height="5" fill="rgb(223,223,223)"/><rect x="40" y="397" width="5" height="5" fill="rgb(226,226,226)"/><rect x="45" y="397" width="5" height="5" fill="rgb(201,201,201)"/><rect x="50" y="397" width="5" height="5" fill="rgb(211,211,211)"/><rect x="55" y="397" width="5" height="5" fill="rgb(223,223,223)"/><rect x="60" y="397" width="5" height="5" fill="rgb(200,200,200)"/><rect x="65" y="397" width="5" height="5" fill="rgb(232,232,232)"/><rect x="25" y="402" width="5" height="5" fill="rgb(224,224,224)"/><rect x="30" y="402" width="5" height="5" fill="rgb(237,237,237)"/><rect x="35" y="402" width="5" height="5" fill="rgb(217,217,217)"/><rect x="40" y="402" width="5" height="5" fill="rgb(223,223,223)"/><rect x="45" y="402" width="5" height="5" fill="rgb(223,223,223)"/><rect x="50" y="402" width="5" height="5" fill="rgb(234,234,234)"/><rect x="55" y="402" width="5" height="5" fill="rgb(238,238,238)"/><rect x="60" y="402" width="5" height="5" fill="rgb(225,225,225)"/><rect x="65" y="402" width="5" height="5" fill="rgb(219,219,219)"/></g></g><rect x="21.3" y="406.2" width="152.5" height="13.100000000000023" fill="#68b3bb"/><rect x="181.5" y="406.2" width="341.5" height="13.100000000000023" fill="#68b3bb"/><text x="25.5" y="416.7" font-size="9.5" fill="#fff" font-weight="bold" text-anchor="start" >Total</text><text x="239.6" y="416.7" font-size="9.5" fill="#fff" font-weight="bold" text-anchor="end" letter-spacing="-0.35">4 788</text><text x="306.2" y="416.7" font-size="9.5" fill="#fff" font-weight="bold" text-anchor="end" letter-spacing="-0.35">120 534</text><text x="376" y="416.7" font-size="9.5" fill="#fff" font-weight="bold" text-anchor="end" letter-spacing="-0.35">7452</text><text x="446.5" y="416.7" font-size="9.5" fill="#fff" font-weight="bold" text-anchor="end" letter-spacing="-0.35">642 €</text><text x="518.7" y="416.7" font-size="9.5" fill="#fff" font-weight="bold" text-anchor="end" letter-spacing="-0.35">16</text><rect x="243.9" y="406.2" width="1" height="13" fill="#a9d3d7"/><rect x="310.0" y="406.2" width="1" height="13" fill="#a9d3d7"/><rect x="380.8" y="406.2" width="1" height="13" fill="#a9d3d7"/><rect x="450.4" y="406.2" width="1" height="13" fill="#a9d3d7"/><rect x="719" y="220" width="5.6" height="197" rx="2.8" fill="#a8a8a8"/><text x="28" y="458" font-size="9.5" fill="#606060" font-weight="bold" text-anchor="start" >Choix indicateur</text><path d="M353.75,451.5 L357,455.0 L360.25,451.5" fill="none" stroke="#7a7a7a" stroke-width="1.05"/><rect x="26" y="467" width="337.8" height="20.600000000000023" fill="#f9f9f9" stroke="#ebebeb" stroke-width="1"/><text x="30.5" y="482" font-size="9.5" fill="#333" font-weight="normal" text-anchor="start" >Panier articles</text><path d="M348.95,475 L353.7,480 L358.45,475" fill="none" stroke="#444" stroke-width="1"/><text x="419" y="457" font-size="9.5" fill="#606060" font-weight="bold" text-anchor="start" >Date</text><path d="M715.75,451 L719,454.5 L722.25,451" fill="none" stroke="#7a7a7a" stroke-width="1.05"/><rect x="419.1" y="465.5" width="88.5" height="22.69999999999999" fill="#f9f9f9" stroke="#ebebeb" stroke-width="1"/><text x="425.5" y="480.5" font-size="9.5" fill="#333" font-weight="normal" text-anchor="start" >Dernier</text><path d="M494.55,474 L498.3,478.5 L502.05,474" fill="none" stroke="#444" stroke-width="1"/><rect x="513.5" y="465.5" width="55.299999999999955" height="22.69999999999999" fill="#f9f9f9" stroke="#ebebeb" stroke-width="1"/><text x="519.6" y="480.5" font-size="9.5" fill="#333" font-weight="normal" text-anchor="start" >3</text><rect x="574.6" y="465.5" width="147.10000000000002" height="22.69999999999999" fill="#f9f9f9" stroke="#ebebeb" stroke-width="1"/><text x="580" y="480.5" font-size="9.5" fill="#333" font-weight="normal" text-anchor="start" >Ans</text><path d="M708.6,474 L712.6,478.5 L716.6,474" fill="none" stroke="#444" stroke-width="1"/><rect x="48" y="506.9" width="672" height="1" fill="#e6e6e6"/><text x="40.5" y="510.9" font-size="9" fill="#707070" font-weight="normal" text-anchor="end" >30</text><rect x="48" y="576.7" width="672" height="1" fill="#e6e6e6"/><text x="40.5" y="580.7" font-size="9" fill="#707070" font-weight="normal" text-anchor="end" >20</text><rect x="48" y="646.2" width="672" height="1" fill="#e6e6e6"/><text x="40.5" y="650.2" font-size="9" fill="#707070" font-weight="normal" text-anchor="end" >10</text><path d="M56.60,679.80 C59.34,667.08 70.44,603.53 75.91,590.00 C81.39,576.47 89.76,583.18 95.23,584.30 C100.70,585.42 109.07,596.67 114.54,597.90 C120.02,599.13 128.39,592.45 133.86,593.00 C139.33,593.55 147.70,600.41 153.17,601.80 C158.65,603.19 167.02,599.16 172.49,602.80 C177.96,606.44 186.33,625.25 191.80,627.50 C197.28,629.75 205.65,617.14 211.12,618.70 C216.59,620.26 224.96,641.08 230.43,638.50 C235.90,635.92 244.27,604.82 249.75,600.50 C255.22,596.18 263.59,602.55 269.06,608.00 C274.53,613.45 282.90,633.48 288.38,639.00 C293.85,644.52 302.22,649.12 307.69,647.00 C313.16,644.88 321.53,629.31 327.01,624.00 C332.48,618.69 340.85,612.28 346.32,609.50 C351.79,606.72 360.16,604.22 365.64,604.40 C371.11,604.58 379.48,610.03 384.95,610.80 C390.42,611.56 398.79,609.13 404.26,609.80 C409.74,610.47 418.11,612.71 423.58,615.50 C429.05,618.29 437.42,626.10 442.89,629.50 C448.37,632.90 456.74,639.43 462.21,639.50 C467.68,639.57 476.05,646.72 481.52,630.00 C487.00,613.28 495.37,529.29 500.84,521.50 C506.31,513.71 514.68,557.67 520.15,575.00 C525.63,592.33 534.00,639.12 539.47,643.80 C544.94,648.47 553.31,615.72 558.78,608.00 C564.25,600.28 572.62,590.55 578.10,589.30 C583.57,588.05 591.94,598.44 597.41,599.20 C602.88,599.97 611.25,594.05 616.73,594.70 C622.20,595.35 630.57,598.80 636.04,603.80 C641.51,608.80 649.88,625.58 655.36,630.00 C660.83,634.42 669.20,651.29 674.67,635.00 C680.14,618.71 688.51,515.38 693.99,515.00 C699.46,514.62 710.56,615.68 713.30,632.30 L713.3,681 L56.6,681 Z" fill="#10818d" fill-opacity="0.165"/><path d="M56.60,679.80 C59.34,667.08 70.44,603.53 75.91,590.00 C81.39,576.47 89.76,583.18 95.23,584.30 C100.70,585.42 109.07,596.67 114.54,597.90 C120.02,599.13 128.39,592.45 133.86,593.00 C139.33,593.55 147.70,600.41 153.17,601.80 C158.65,603.19 167.02,599.16 172.49,602.80 C177.96,606.44 186.33,625.25 191.80,627.50 C197.28,629.75 205.65,617.14 211.12,618.70 C216.59,620.26 224.96,641.08 230.43,638.50 C235.90,635.92 244.27,604.82 249.75,600.50 C255.22,596.18 263.59,602.55 269.06,608.00 C274.53,613.45 282.90,633.48 288.38,639.00 C293.85,644.52 302.22,649.12 307.69,647.00 C313.16,644.88 321.53,629.31 327.01,624.00 C332.48,618.69 340.85,612.28 346.32,609.50 C351.79,606.72 360.16,604.22 365.64,604.40 C371.11,604.58 379.48,610.03 384.95,610.80 C390.42,611.56 398.79,609.13 404.26,609.80 C409.74,610.47 418.11,612.71 423.58,615.50 C429.05,618.29 437.42,626.10 442.89,629.50 C448.37,632.90 456.74,639.43 462.21,639.50 C467.68,639.57 476.05,646.72 481.52,630.00 C487.00,613.28 495.37,529.29 500.84,521.50 C506.31,513.71 514.68,557.67 520.15,575.00 C525.63,592.33 534.00,639.12 539.47,643.80 C544.94,648.47 553.31,615.72 558.78,608.00 C564.25,600.28 572.62,590.55 578.10,589.30 C583.57,588.05 591.94,598.44 597.41,599.20 C602.88,599.97 611.25,594.05 616.73,594.70 C622.20,595.35 630.57,598.80 636.04,603.80 C641.51,608.80 649.88,625.58 655.36,630.00 C660.83,634.42 669.20,651.29 674.67,635.00 C680.14,618.71 688.51,515.38 693.99,515.00 C699.46,514.62 710.56,615.68 713.30,632.30" fill="none" stroke="#10818d" stroke-width="1.8" stroke-linejoin="round"/><text x="54.60" y="688.4" font-size="8.5" fill="#7a7a7a" text-anchor="end" letter-spacing="-0.25" transform="rotate(-35 54.60 688.4)">2023.01</text><text x="73.91" y="688.4" font-size="8.5" fill="#7a7a7a" text-anchor="end" letter-spacing="-0.25" transform="rotate(-35 73.91 688.4)">2023.02</text><text x="93.23" y="688.4" font-size="8.5" fill="#7a7a7a" text-anchor="end" letter-spacing="-0.25" transform="rotate(-35 93.23 688.4)">2023.03</text><text x="112.54" y="688.4" font-size="8.5" fill="#7a7a7a" text-anchor="end" letter-spacing="-0.25" transform="rotate(-35 112.54 688.4)">2023.04</text><text x="131.86" y="688.4" font-size="8.5" fill="#7a7a7a" text-anchor="end" letter-spacing="-0.25" transform="rotate(-35 131.86 688.4)">2023.05</text><text x="151.17" y="688.4" font-size="8.5" fill="#7a7a7a" text-anchor="end" letter-spacing="-0.25" transform="rotate(-35 151.17 688.4)">2023.06</text><text x="170.49" y="688.4" font-size="8.5" fill="#7a7a7a" text-anchor="end" letter-spacing="-0.25" transform="rotate(-35 170.49 688.4)">2023.07</text><text x="189.80" y="688.4" font-size="8.5" fill="#7a7a7a" text-anchor="end" letter-spacing="-0.25" transform="rotate(-35 189.80 688.4)">2023.08</text><text x="209.12" y="688.4" font-size="8.5" fill="#7a7a7a" text-anchor="end" letter-spacing="-0.25" transform="rotate(-35 209.12 688.4)">2023.09</text><text x="228.43" y="688.4" font-size="8.5" fill="#7a7a7a" text-anchor="end" letter-spacing="-0.25" transform="rotate(-35 228.43 688.4)">2023.10</text><text x="247.75" y="688.4" font-size="8.5" fill="#7a7a7a" text-anchor="end" letter-spacing="-0.25" transform="rotate(-35 247.75 688.4)">2023.11</text><text x="267.06" y="688.4" font-size="8.5" fill="#7a7a7a" text-anchor="end" letter-spacing="-0.25" transform="rotate(-35 267.06 688.4)">2023.12</text><text x="286.38" y="688.4" font-size="8.5" fill="#7a7a7a" text-anchor="end" letter-spacing="-0.25" transform="rotate(-35 286.38 688.4)">2024.01</text><text x="305.69" y="688.4" font-size="8.5" fill="#7a7a7a" text-anchor="end" letter-spacing="-0.25" transform="rotate(-35 305.69 688.4)">2024.02</text><text x="325.01" y="688.4" font-size="8.5" fill="#7a7a7a" text-anchor="end" letter-spacing="-0.25" transform="rotate(-35 325.01 688.4)">2024.03</text><text x="344.32" y="688.4" font-size="8.5" fill="#7a7a7a" text-anchor="end" letter-spacing="-0.25" transform="rotate(-35 344.32 688.4)">2024.04</text><text x="363.64" y="688.4" font-size="8.5" fill="#7a7a7a" text-anchor="end" letter-spacing="-0.25" transform="rotate(-35 363.64 688.4)">2024.05</text><text x="382.95" y="688.4" font-size="8.5" fill="#7a7a7a" text-anchor="end" letter-spacing="-0.25" transform="rotate(-35 382.95 688.4)">2024.06</text><text x="402.26" y="688.4" font-size="8.5" fill="#7a7a7a" text-anchor="end" letter-spacing="-0.25" transform="rotate(-35 402.26 688.4)">2024.07</text><text x="421.58" y="688.4" font-size="8.5" fill="#7a7a7a" text-anchor="end" letter-spacing="-0.25" transform="rotate(-35 421.58 688.4)">2024.08</text><text x="440.89" y="688.4" font-size="8.5" fill="#7a7a7a" text-anchor="end" letter-spacing="-0.25" transform="rotate(-35 440.89 688.4)">2024.09</text><text x="460.21" y="688.4" font-size="8.5" fill="#7a7a7a" text-anchor="end" letter-spacing="-0.25" transform="rotate(-35 460.21 688.4)">2024.10</text><text x="479.52" y="688.4" font-size="8.5" fill="#7a7a7a" text-anchor="end" letter-spacing="-0.25" transform="rotate(-35 479.52 688.4)">2024.11</text><text x="498.84" y="688.4" font-size="8.5" fill="#7a7a7a" text-anchor="end" letter-spacing="-0.25" transform="rotate(-35 498.84 688.4)">2024.12</text><text x="518.15" y="688.4" font-size="8.5" fill="#7a7a7a" text-anchor="end" letter-spacing="-0.25" transform="rotate(-35 518.15 688.4)">2025.01</text><text x="537.47" y="688.4" font-size="8.5" fill="#7a7a7a" text-anchor="end" letter-spacing="-0.25" transform="rotate(-35 537.47 688.4)">2025.02</text><text x="556.78" y="688.4" font-size="8.5" fill="#7a7a7a" text-anchor="end" letter-spacing="-0.25" transform="rotate(-35 556.78 688.4)">2025.03</text><text x="576.10" y="688.4" font-size="8.5" fill="#7a7a7a" text-anchor="end" letter-spacing="-0.25" transform="rotate(-35 576.10 688.4)">2025.04</text><text x="595.41" y="688.4" font-size="8.5" fill="#7a7a7a" text-anchor="end" letter-spacing="-0.25" transform="rotate(-35 595.41 688.4)">2025.05</text><text x="614.73" y="688.4" font-size="8.5" fill="#7a7a7a" text-anchor="end" letter-spacing="-0.25" transform="rotate(-35 614.73 688.4)">2025.06</text><text x="634.04" y="688.4" font-size="8.5" fill="#7a7a7a" text-anchor="end" letter-spacing="-0.25" transform="rotate(-35 634.04 688.4)">2025.07</text><text x="653.36" y="688.4" font-size="8.5" fill="#7a7a7a" text-anchor="end" letter-spacing="-0.25" transform="rotate(-35 653.36 688.4)">2025.08</text><text x="672.67" y="688.4" font-size="8.5" fill="#7a7a7a" text-anchor="end" letter-spacing="-0.25" transform="rotate(-35 672.67 688.4)">2025.09</text><text x="691.99" y="688.4" font-size="8.5" fill="#7a7a7a" text-anchor="end" letter-spacing="-0.25" transform="rotate(-35 691.99 688.4)">2025.10</text><text x="711.30" y="688.4" font-size="8.5" fill="#7a7a7a" text-anchor="end" letter-spacing="-0.25" transform="rotate(-35 711.30 688.4)">2025.11</text><text x="748.6" y="175.2" font-size="9.5" fill="#0aa3bb" font-weight="bold" text-anchor="start" >Nombre de factures</text><rect x="773.70" y="242.01" width="49.2" height="74.69" fill="#3598a6"/><text x="798.3000000000001" y="235.009" font-size="8.5" fill="#707070" font-weight="normal" text-anchor="middle" letter-spacing="-0.2">774</text><text x="798.3000000000001" y="329" font-size="8.5" fill="#6e6e6e" font-weight="normal" text-anchor="middle" letter-spacing="-0.2">2025.01</text><rect x="836.55" y="257.06" width="49.2" height="59.64" fill="#3598a6"/><text x="861.1500000000001" y="250.063" font-size="8.5" fill="#707070" font-weight="normal" text-anchor="middle" letter-spacing="-0.2">618</text><text x="861.1500000000001" y="329" font-size="8.5" fill="#6e6e6e" font-weight="normal" text-anchor="middle" letter-spacing="-0.2">2025.02</text><rect x="899.40" y="245.00" width="49.2" height="71.70" fill="#3598a6"/><text x="924.0000000000001" y="238.0005" font-size="8.5" fill="#707070" font-weight="normal" text-anchor="middle" letter-spacing="-0.2">743</text><text x="924.0000000000001" y="329" font-size="8.5" fill="#6e6e6e" font-weight="normal" text-anchor="middle" letter-spacing="-0.2">2025.03</text><rect x="962.25" y="207.94" width="49.2" height="108.76" fill="#3598a6"/><text x="986.85" y="200.9445" font-size="8.5" fill="#707070" font-weight="normal" text-anchor="middle" letter-spacing="-0.2">1127</text><text x="986.85" y="329" font-size="8.5" fill="#6e6e6e" font-weight="normal" text-anchor="middle" letter-spacing="-0.2">2025.04</text><rect x="1025.10" y="219.81" width="49.2" height="96.89" fill="#3598a6"/><text x="1049.7" y="212.814" font-size="8.5" fill="#707070" font-weight="normal" text-anchor="middle" letter-spacing="-0.2">1004</text><text x="1049.7" y="329" font-size="8.5" fill="#6e6e6e" font-weight="normal" text-anchor="middle" letter-spacing="-0.2">2025.05</text><rect x="1087.95" y="204.18" width="49.2" height="112.52" fill="#3598a6"/><text x="1112.55" y="197.18099999999998" font-size="8.5" fill="#707070" font-weight="normal" text-anchor="middle" letter-spacing="-0.2">1166</text><text x="1112.55" y="329" font-size="8.5" fill="#6e6e6e" font-weight="normal" text-anchor="middle" letter-spacing="-0.2">2025.06</text><rect x="1150.80" y="203.70" width="49.2" height="113.00" fill="#3598a6"/><text x="1175.4" y="196.69849999999997" font-size="8.5" fill="#707070" font-weight="normal" text-anchor="middle" letter-spacing="-0.2">1171</text><text x="1175.4" y="329" font-size="8.5" fill="#6e6e6e" font-weight="normal" text-anchor="middle" letter-spacing="-0.2">2025.07</text><rect x="1213.65" y="234.77" width="49.2" height="81.93" fill="#3598a6"/><text x="1238.25" y="227.7715" font-size="8.5" fill="#707070" font-weight="normal" text-anchor="middle" letter-spacing="-0.2">849</text><text x="1238.25" y="329" font-size="8.5" fill="#6e6e6e" font-weight="normal" text-anchor="middle" letter-spacing="-0.2">2025.08</text><text x="748.6" y="366.8" font-size="9.5" fill="#0aa3bb" font-weight="bold" text-anchor="start" >Panier nombre d'articles</text><rect x="773.70" y="398.85" width="49.2" height="110.05" fill="#c2a521"/><text x="798.3000000000001" y="391.85249999999996" font-size="8.5" fill="#707070" font-weight="normal" text-anchor="middle" letter-spacing="-0.2">20,1</text><text x="798.3000000000001" y="520.9" font-size="8.5" fill="#6e6e6e" font-weight="normal" text-anchor="middle" letter-spacing="-0.2">2025.01</text><rect x="836.55" y="451.96" width="49.2" height="56.94" fill="#c2a521"/><text x="861.1500000000001" y="444.96" font-size="8.5" fill="#707070" font-weight="normal" text-anchor="middle" letter-spacing="-0.2">10,4</text><text x="861.1500000000001" y="520.9" font-size="8.5" fill="#6e6e6e" font-weight="normal" text-anchor="middle" letter-spacing="-0.2">2025.02</text><rect x="899.40" y="424.04" width="49.2" height="84.86" fill="#c2a521"/><text x="924.0000000000001" y="417.03749999999997" font-size="8.5" fill="#707070" font-weight="normal" text-anchor="middle" letter-spacing="-0.2">15,5</text><text x="924.0000000000001" y="520.9" font-size="8.5" fill="#6e6e6e" font-weight="normal" text-anchor="middle" letter-spacing="-0.2">2025.03</text><rect x="962.25" y="409.25" width="49.2" height="99.64" fill="#c2a521"/><text x="986.85" y="402.255" font-size="8.5" fill="#707070" font-weight="normal" text-anchor="middle" letter-spacing="-0.2">18,2</text><text x="986.85" y="520.9" font-size="8.5" fill="#6e6e6e" font-weight="normal" text-anchor="middle" letter-spacing="-0.2">2025.04</text><rect x="1025.10" y="416.92" width="49.2" height="91.98" fill="#c2a521"/><text x="1049.7" y="409.91999999999996" font-size="8.5" fill="#707070" font-weight="normal" text-anchor="middle" letter-spacing="-0.2">16,8</text><text x="1049.7" y="520.9" font-size="8.5" fill="#6e6e6e" font-weight="normal" text-anchor="middle" letter-spacing="-0.2">2025.05</text><rect x="1087.95" y="413.63" width="49.2" height="95.26" fill="#c2a521"/><text x="1112.55" y="406.635" font-size="8.5" fill="#707070" font-weight="normal" text-anchor="middle" letter-spacing="-0.2">17,4</text><text x="1112.55" y="520.9" font-size="8.5" fill="#6e6e6e" font-weight="normal" text-anchor="middle" letter-spacing="-0.2">2025.06</text><rect x="1150.80" y="420.75" width="49.2" height="88.15" fill="#c2a521"/><text x="1175.4" y="413.75249999999994" font-size="8.5" fill="#707070" font-weight="normal" text-anchor="middle" letter-spacing="-0.2">16,1</text><text x="1175.4" y="520.9" font-size="8.5" fill="#6e6e6e" font-weight="normal" text-anchor="middle" letter-spacing="-0.2">2025.07</text><rect x="1213.65" y="441.56" width="49.2" height="67.34" fill="#c2a521"/><text x="1238.25" y="434.5575" font-size="8.5" fill="#707070" font-weight="normal" text-anchor="middle" letter-spacing="-0.2">12,3</text><text x="1238.25" y="520.9" font-size="8.5" fill="#6e6e6e" font-weight="normal" text-anchor="middle" letter-spacing="-0.2">2025.08</text><text x="748.6" y="557.6" font-size="9.5" fill="#0aa3bb" font-weight="bold" text-anchor="start" >Panier moyen en €</text><rect x="773.70" y="643.11" width="49.2" height="56.59" fill="#d6915e"/><text x="798.3000000000001" y="636.1124000000001" font-size="8.5" fill="#707070" font-weight="normal" text-anchor="middle" letter-spacing="-0.2">386 €</text><text x="798.3000000000001" y="712.1" font-size="8.5" fill="#6e6e6e" font-weight="normal" text-anchor="middle" letter-spacing="-0.2">2025.01</text><rect x="836.55" y="637.54" width="49.2" height="62.16" fill="#d6915e"/><text x="861.1500000000001" y="630.5416" font-size="8.5" fill="#707070" font-weight="normal" text-anchor="middle" letter-spacing="-0.2">424 €</text><text x="861.1500000000001" y="712.1" font-size="8.5" fill="#6e6e6e" font-weight="normal" text-anchor="middle" letter-spacing="-0.2">2025.02</text><rect x="899.40" y="614.09" width="49.2" height="85.61" fill="#d6915e"/><text x="924.0000000000001" y="607.0856" font-size="8.5" fill="#707070" font-weight="normal" text-anchor="middle" letter-spacing="-0.2">584 €</text><text x="924.0000000000001" y="712.1" font-size="8.5" fill="#6e6e6e" font-weight="normal" text-anchor="middle" letter-spacing="-0.2">2025.03</text><rect x="962.25" y="591.51" width="49.2" height="108.19" fill="#d6915e"/><text x="986.85" y="584.5092000000001" font-size="8.5" fill="#707070" font-weight="normal" text-anchor="middle" letter-spacing="-0.2">738 €</text><text x="986.85" y="712.1" font-size="8.5" fill="#6e6e6e" font-weight="normal" text-anchor="middle" letter-spacing="-0.2">2025.04</text><rect x="1025.10" y="588.72" width="49.2" height="110.98" fill="#d6915e"/><text x="1049.7" y="581.7238" font-size="8.5" fill="#707070" font-weight="normal" text-anchor="middle" letter-spacing="-0.2">757 €</text><text x="1049.7" y="712.1" font-size="8.5" fill="#6e6e6e" font-weight="normal" text-anchor="middle" letter-spacing="-0.2">2025.05</text><rect x="1087.95" y="587.84" width="49.2" height="111.86" fill="#d6915e"/><text x="1112.55" y="580.8442" font-size="8.5" fill="#707070" font-weight="normal" text-anchor="middle" letter-spacing="-0.2">763 €</text><text x="1112.55" y="712.1" font-size="8.5" fill="#6e6e6e" font-weight="normal" text-anchor="middle" letter-spacing="-0.2">2025.06</text><rect x="1150.80" y="595.91" width="49.2" height="103.79" fill="#d6915e"/><text x="1175.4" y="588.9072000000001" font-size="8.5" fill="#707070" font-weight="normal" text-anchor="middle" letter-spacing="-0.2">708 €</text><text x="1175.4" y="712.1" font-size="8.5" fill="#6e6e6e" font-weight="normal" text-anchor="middle" letter-spacing="-0.2">2025.07</text><rect x="1213.65" y="616.14" width="49.2" height="83.56" fill="#d6915e"/><text x="1238.25" y="609.138" font-size="8.5" fill="#707070" font-weight="normal" text-anchor="middle" letter-spacing="-0.2">570 €</text><text x="1238.25" y="712.1" font-size="8.5" fill="#6e6e6e" font-weight="normal" text-anchor="middle" letter-spacing="-0.2">2025.08</text></svg>
</body></html>
